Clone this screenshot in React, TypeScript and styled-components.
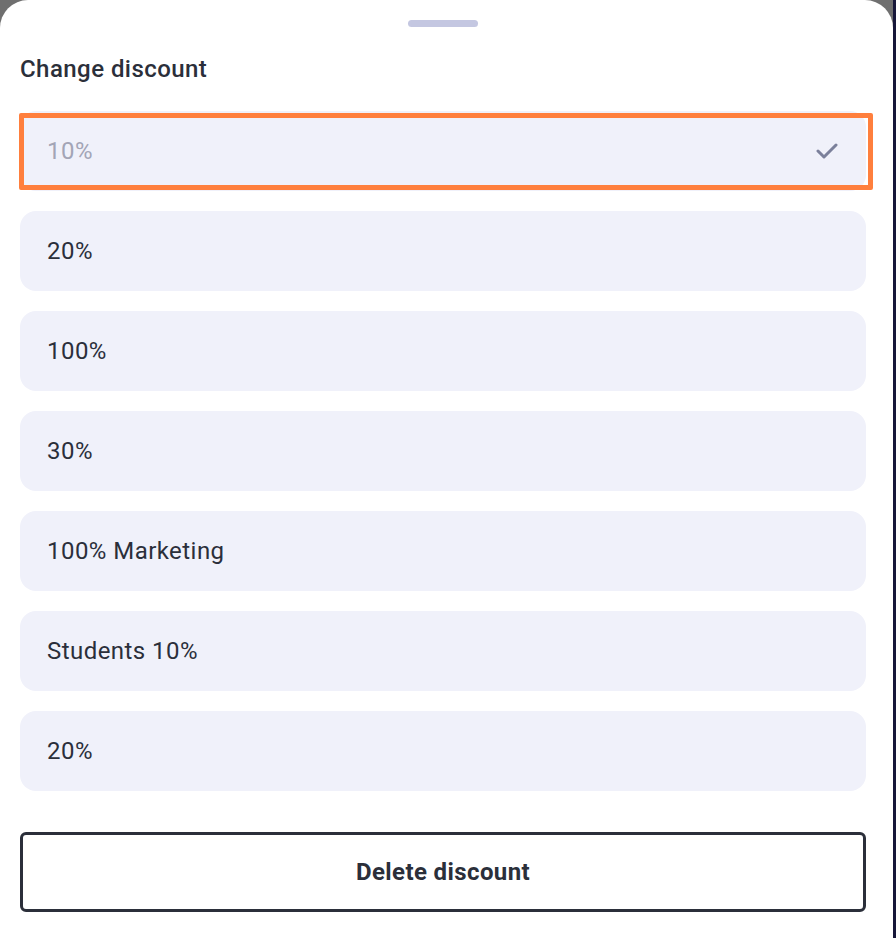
import React from "react";
import styled, { createGlobalStyle } from "styled-components";

const GlobalStyle = createGlobalStyle`
  html, body {
    margin: 0;
    padding: 0;
    background: #6f6f6f;
    font-family: Roboto, "Liberation Sans", Arial, sans-serif;
  }
`;

const Page = styled.div`
  display: flex;
  width: 896px;
  height: 938px;
  overflow: hidden;
`;

const Sheet = styled.div`
  flex: 1;
  display: flex;
  flex-direction: column;
  background: #ffffff;
  border-radius: 28px 28px 0 0;
  padding: 20px 27px 0 20px;
  box-sizing: border-box;
`;

const ScrollStrip = styled.div`
  width: 3px;
  background: #17173a;
`;

const Handle = styled.div`
  align-self: center;
  width: 70px;
  height: 7px;
  border-radius: 4px;
  background: #c4c7e1;
`;

const Title = styled.h2`
  margin: 27px 0 0;
  font-size: 24px;
  line-height: 30px;
  letter-spacing: 0.45px;
  font-weight: 500;
  color: #2b2f3a;
`;

const List = styled.div`
  display: flex;
  flex-direction: column;
  gap: 20px;
  margin-top: 27px;
`;

const Option = styled.div<{ $selected?: boolean }>`
  position: relative;
  display: flex;
  align-items: center;
  justify-content: space-between;
  height: 80px;
  padding: 0 27px;
  border-radius: 16px;
  background: #f0f1fa;
  font-size: 24px;
  letter-spacing: 0.45px;
  color: ${(p) => (p.$selected ? "#a3a5b6" : "#2b2f3a")};
`;

const FocusRing = styled.div`
  position: absolute;
  left: -1px;
  top: 2px;
  width: 854px;
  height: 77px;
  border: 5px solid #ff7f3d;
  border-radius: 2px;
  box-sizing: border-box;
  pointer-events: none;
`;

const Check = styled.svg`
  width: 22px;
  height: 16px;
  margin-right: 1px;
`;

const DeleteButton = styled.button`
  margin-top: 41px;
  height: 80px;
  border: 3px solid #2b2f3a;
  border-radius: 6px;
  background: #ffffff;
  font-family: Roboto, "Liberation Sans", Arial, sans-serif;
  font-size: 24px;
  letter-spacing: 0.4px;
  font-weight: 700;
  color: #2b2f3a;
`;

const options = ["20%", "100%", "30%", "100% Marketing", "Students 10%", "20%"];

const App = () => {
  return (
    <Page>
      <GlobalStyle />
      <Sheet>
        <Handle />
        <Title>Change discount</Title>
        <List>
          <Option $selected>
            10%
            <Check viewBox="0 0 22 16">
              <polyline
                points="2,8 8,14 20,2"
                fill="none"
                stroke="#7b809b"
                strokeWidth="3"
                strokeLinecap="round"
                strokeLinejoin="round"
              />
            </Check>
            <FocusRing />
          </Option>
          {options.map((label, i) => (
            <Option key={i}>{label}</Option>
          ))}
        </List>
        <DeleteButton type="button">Delete discount</DeleteButton>
      </Sheet>
      <ScrollStrip />
    </Page>
  );
};

export default App;
